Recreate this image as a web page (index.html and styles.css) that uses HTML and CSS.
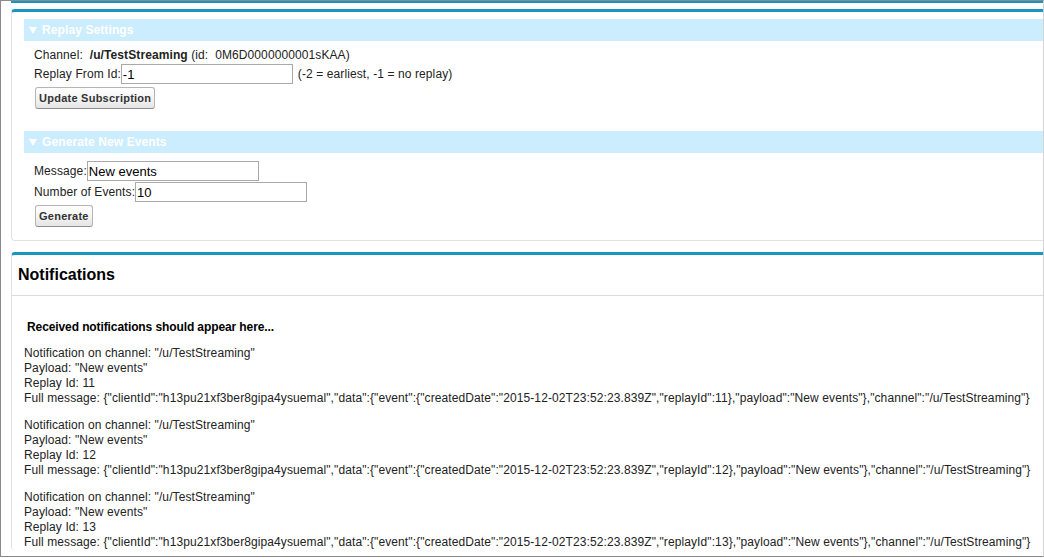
FILE: index.html
```html
<!DOCTYPE html>
<html lang="en">

<head>
    <meta charset="UTF-8">
    <title>Streaming Replay</title>
    <link rel="stylesheet" href="styles.css">
</head>

<body>
    <div class="window">
        <div class="prev-edge"></div>

        <div class="block">
            <div class="sub-header"><span class="twisty"></span>Replay Settings</div>
            <div class="section">
                <div class="row">Channel:&nbsp; <b>/u/TestStreaming</b> (id:&nbsp; 0M6D0000000001sKAA)</div>
                <div class="field-row">
                    <label>Replay From Id:</label><input class="field" type="text" value="-1">
                    <span class="note">(-2 = earliest, -1 = no replay)</span>
                </div>
                <div class="btn-row"><button class="btn">Update Subscription</button></div>
            </div>

            <div class="sub-header gap"><span class="twisty"></span>Generate New Events</div>
            <div class="section second">
                <div class="field-row">
                    <label>Message:</label><input class="field" type="text" value="New events">
                </div>
                <div class="field-row">
                    <label>Number of Events:</label><input class="field" type="text" value="10">
                </div>
                <div class="btn-row"><button class="btn">Generate</button></div>
            </div>
        </div>

        <div class="block notifications">
            <div class="block-title">
                <h2>Notifications</h2>
            </div>
            <div class="block-body">
                <p class="hint">Received notifications should appear here...</p>

                <div class="notification">
                    <div>Notification on channel: "/u/TestStreaming"</div>
                    <div>Payload: "New events"</div>
                    <div>Replay Id: 11</div>
                    <div>Full message: {"clientId":"h13pu21xf3ber8gipa4ysuemal","data":{"event":{"createdDate":"2015-12-02T23:52:23.839Z","replayId":11},"payload":"New events"},"channel":"/u/TestStreaming"}</div>
                </div>

                <div class="notification">
                    <div>Notification on channel: "/u/TestStreaming"</div>
                    <div>Payload: "New events"</div>
                    <div>Replay Id: 12</div>
                    <div>Full message: {"clientId":"h13pu21xf3ber8gipa4ysuemal","data":{"event":{"createdDate":"2015-12-02T23:52:23.839Z","replayId":12},"payload":"New events"},"channel":"/u/TestStreaming"}</div>
                </div>

                <div class="notification">
                    <div>Notification on channel: "/u/TestStreaming"</div>
                    <div>Payload: "New events"</div>
                    <div>Replay Id: 13</div>
                    <div>Full message: {"clientId":"h13pu21xf3ber8gipa4ysuemal","data":{"event":{"createdDate":"2015-12-02T23:52:23.839Z","replayId":13},"payload":"New events"},"channel":"/u/TestStreaming"}</div>
                </div>
            </div>
        </div>
    </div>
</body>

</html>
```

FILE: styles.css
```css
* {
    margin: 0;
    padding: 0;
    box-sizing: border-box;
}

body {
    font-family: 'Liberation Sans', Arial, sans-serif;
    font-size: 12px;
    letter-spacing: 0.1px;
    color: #222;
    background: #fff;
}

.window {
    height: 557px;
    border: 1px solid #8a8a8a;
    border-right-color: #d4d4d4;
    overflow: hidden;
}

.prev-edge {
    height: 2px;
    margin-left: 10px;
    background-color: #1797c0;
}

.block {
    margin-top: 6px;
    margin-left: 10px;
    border-top: 3px solid #1797c0;
    border-left: 1px solid #e0e3e5;
    border-bottom: 1px solid #e0e3e5;
    border-radius: 4px 0 0 4px;
    padding: 7px 0 13px 12px;
}

.sub-header {
    height: 22px;
    line-height: 22px;
    padding-left: 5px;
    background-color: #ccedfd;
    color: #fff;
    font-weight: bold;
    display: flex;
    align-items: center;
}

.sub-header.gap {
    margin-top: 22px;
}

.twisty {
    width: 0;
    height: 0;
    border-left: 4px solid transparent;
    border-right: 4px solid transparent;
    border-top: 7px solid #fff;
    margin-right: 5px;
}

.section {
    padding: 6px 0 0 10px;
}

.section.second {
    padding-top: 7px;
}

.row {
    line-height: 16px;
}

.field-row {
    display: flex;
    align-items: center;
    margin-top: 1px;
    white-space: pre;
}

.field {
    width: 172px;
    height: 20px;
    border: 1px solid #a9a9a9;
    padding: 0 1px;
    font-family: 'Liberation Sans', Arial, sans-serif;
    font-size: 13px;
    color: #000;
}

.note {
    margin-left: 5px;
}

.btn-row {
    margin-top: 3px;
    padding-left: 1px;
}

.btn {
    height: 22px;
    padding: 0 3px;
    border: 1px solid #b5b5b5;
    border-bottom-color: #8f8f8f;
    border-radius: 3px;
    background: linear-gradient(#ffffff, #f3f3f3 55%, #e4e4e4);
    font-family: 'Liberation Sans', Arial, sans-serif;
    font-size: 11px;
    font-weight: bold;
    letter-spacing: 0.25px;
    color: #333;
}

.notifications {
    margin-top: 11px;
    padding: 0;
    border-bottom: none;
}

.block-title {
    height: 41px;
    border-bottom: 1px solid #dcdcdc;
    padding-left: 6px;
}

.block-title h2 {
    font-size: 16px;
    font-weight: bold;
    letter-spacing: 0;
    line-height: 40px;
    color: #000;
}

.block-body {
    padding: 24px 12px 0 12px;
    line-height: 15px;
}

.hint {
    font-weight: bold;
    letter-spacing: -0.1px;
    color: #000;
    margin-left: 3px;
    margin-bottom: 11px;
}

.notification {
    margin-bottom: 12px;
    white-space: nowrap;
}
```
